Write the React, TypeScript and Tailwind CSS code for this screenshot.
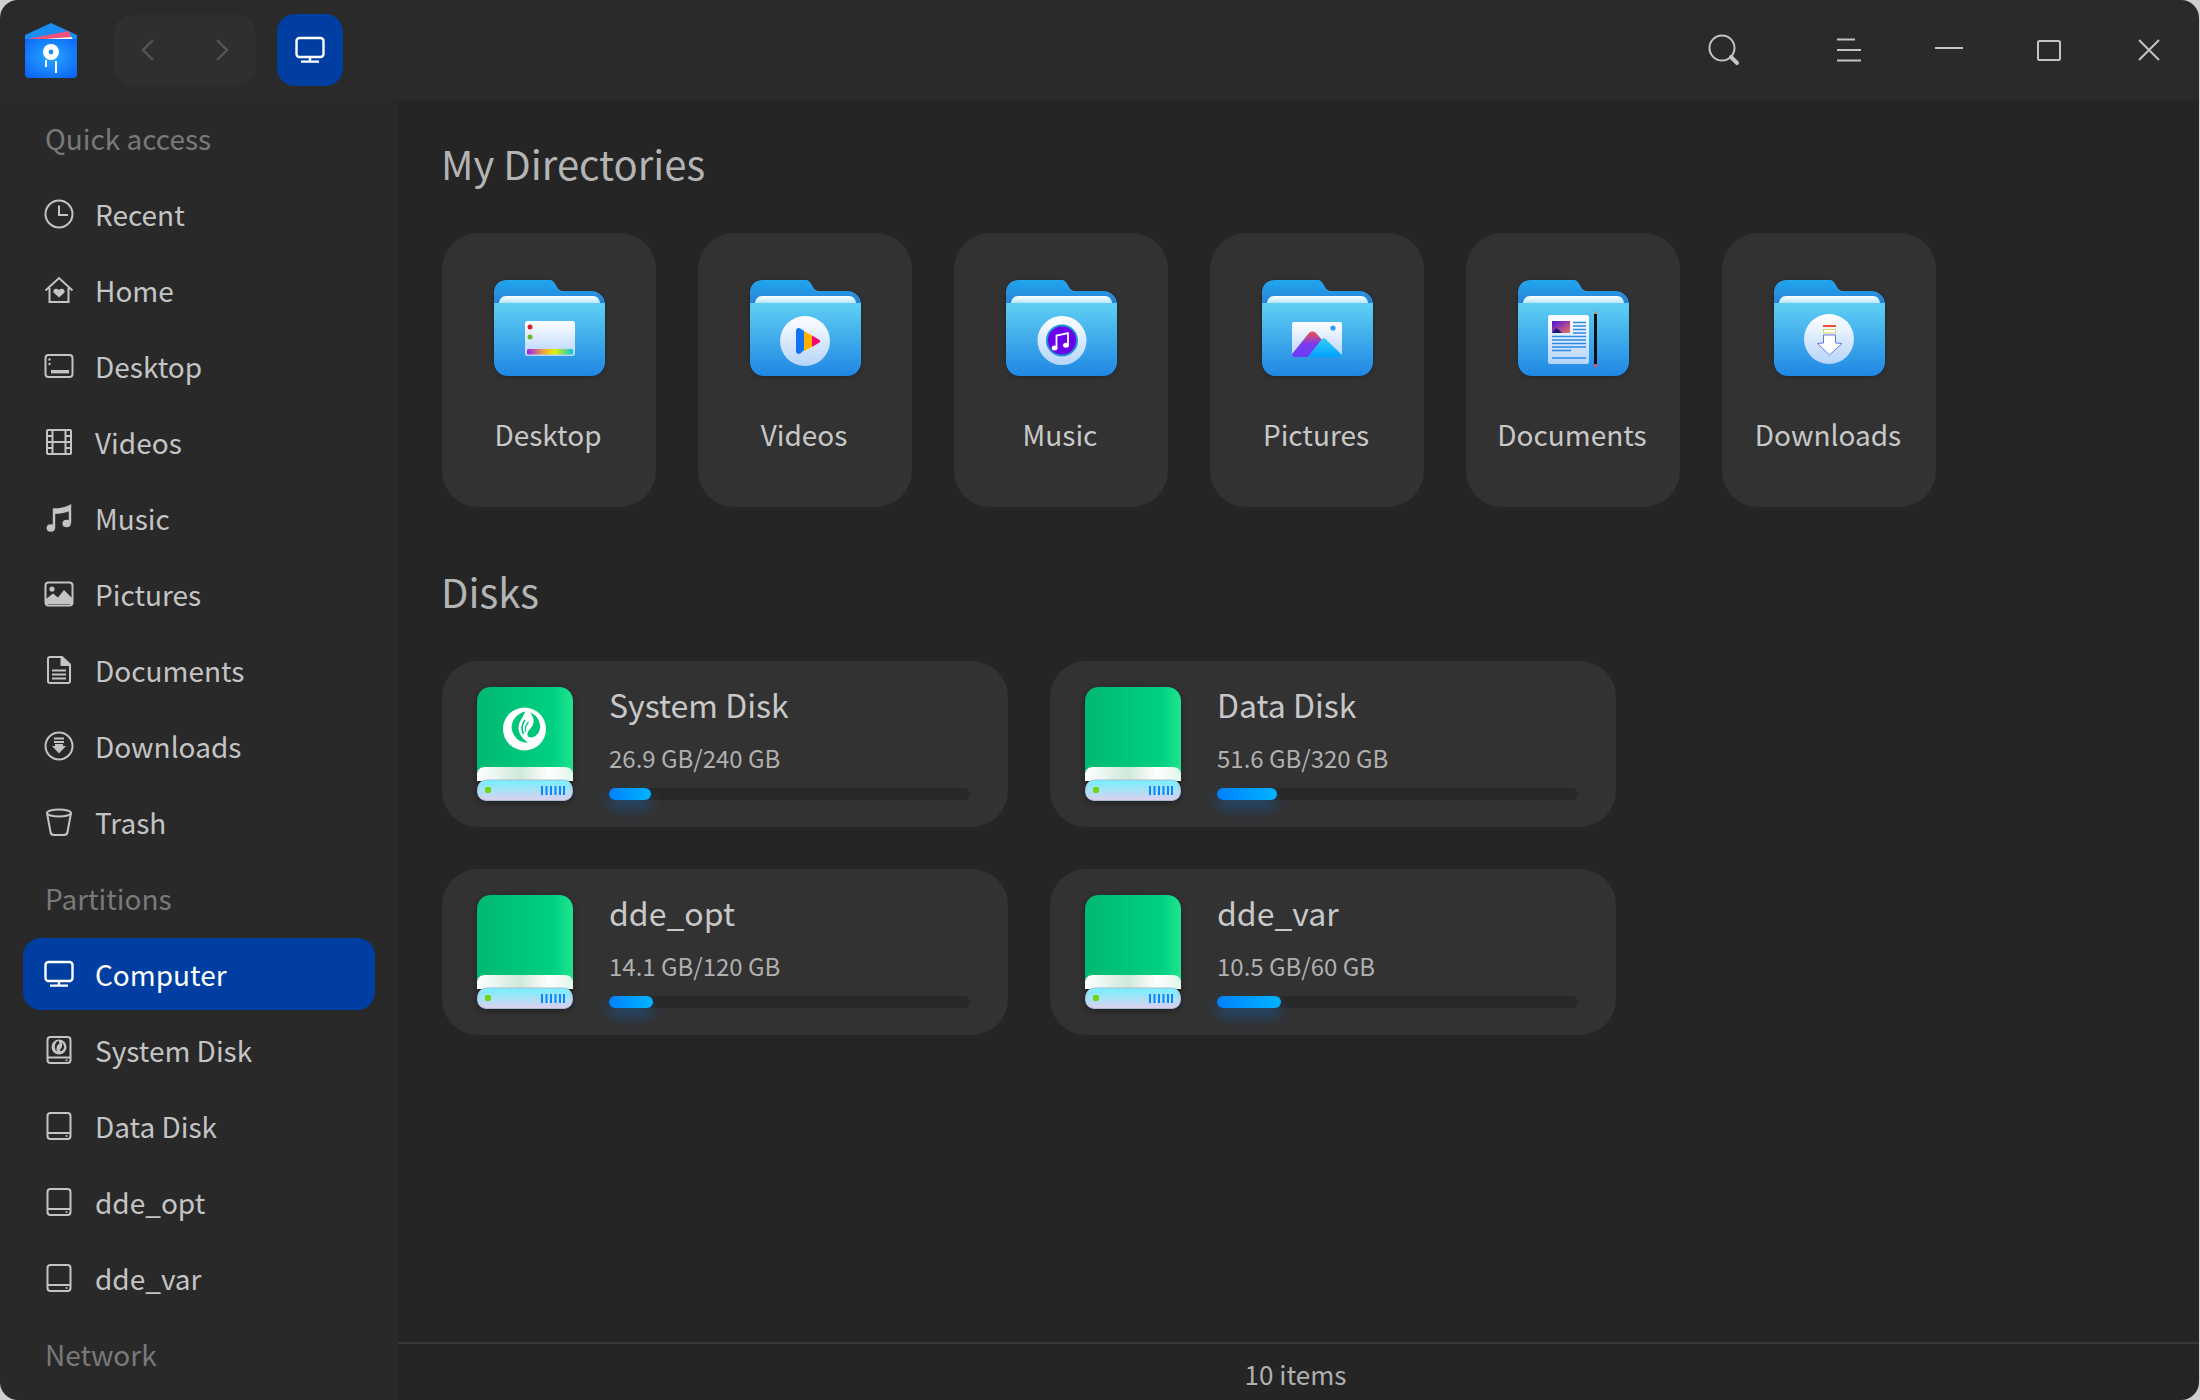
import type { ReactNode } from 'react';

const font = { fontFamily: '"Noto Sans CJK SC", "Noto Sans", sans-serif' };

function Icon({ children, white }: { children: ReactNode; white?: boolean }) {
    return (
        <svg width="30" height="30" viewBox="0 0 30 30" fill="none" stroke={white ? '#ffffff' : '#c4c4c4'} strokeWidth="2" className="shrink-0">
            {children}
        </svg>
    );
}

const fillGray = '#c4c4c4';

const icons: Record<string, ReactNode> = {
    recent: (
        <>
            <circle cx="15" cy="15" r="13.5" />
            <path d="M15 6.5V16H24" />
        </>
    ),
    home: (
        <>
            <path d="M1.5 15.5L15 3L28.5 15.5" />
            <path d="M5.5 13V27H24.5V13" />
            <path d="M15 22.5L9.5 17.5C8.5 14 12.5 12.5 15 15C17.5 12.5 21.5 14 20.5 17.5Z" fill={fillGray} stroke="none" />
        </>
    ),
    desktop: (
        <>
            <rect x="1.5" y="4" width="27" height="22" rx="3" />
            <rect x="7" y="19" width="18" height="3.4" fill={fillGray} stroke="none" />
            <circle cx="5.5" cy="8.5" r="1.2" fill={fillGray} stroke="none" />
            <circle cx="5.5" cy="13" r="1.2" fill={fillGray} stroke="none" />
        </>
    ),
    videos: (
        <>
            <rect x="3" y="3" width="24" height="24" rx="1" />
            <path d="M8.5 3V27M21.5 3V27M3 9H8.5M3 15H8.5M3 21H8.5M21.5 9H27M21.5 15H27M21.5 21H27M8.5 15H21.5" />
        </>
    ),
    music: (
        <>
            <path d="M10 25V6.5C15 6.5 21 5.5 26 3V20" strokeWidth="2.4" />
            <path d="M10 7C15 7 21 6 26 3.6V8C21 10 15 11 10 11Z" fill={fillGray} stroke="none" />
            <ellipse cx="6.8" cy="25" rx="4.2" ry="3.8" fill={fillGray} stroke="none" />
            <ellipse cx="22.6" cy="20.5" rx="4.2" ry="3.8" fill={fillGray} stroke="none" />
        </>
    ),
    pictures: (
        <>
            <rect x="1.5" y="3.5" width="27" height="23" rx="3" />
            <circle cx="8" cy="10" r="2.6" fill={fillGray} stroke="none" />
            <path d="M2 25V20L9 14.5L14 18.5L20 11L28 19V25Z" fill={fillGray} stroke="none" />
        </>
    ),
    documents: (
        <>
            <path d="M4 4C4 2.8 4.8 2 6 2H18L26 9.5V26C26 27.2 25.2 28 24 28H6C4.8 28 4 27.2 4 26Z" />
            <path d="M17.5 2V10H26" fill={fillGray} />
            <path d="M8 15.5H22M8 19.5H22M8 23.5H22" />
        </>
    ),
    downloads: (
        <>
            <circle cx="15" cy="15" r="13.5" />
            <path d="M10 7.5H20M10 11H20" />
            <path d="M8 15H22L15 22.5Z" fill={fillGray} stroke="none" />
            <rect x="11" y="13" width="8" height="3" fill={fillGray} stroke="none" />
        </>
    ),
    trash: (
        <>
            <ellipse cx="15" cy="6" rx="12" ry="3.6" />
            <path d="M3 6L6.5 25C6.8 27 8.5 28 10 28H20C21.5 28 23.2 27 23.5 25L27 6" />
        </>
    ),
    computer: (
        <>
            <rect x="1.5" y="3" width="27" height="19" rx="3" strokeWidth="2.4" />
            <path d="M15 22V26M6 26.6H24" strokeWidth="2.4" />
        </>
    ),
    system: (
        <>
            <rect x="3.5" y="2" width="23" height="26" rx="3" />
            <path d="M3.5 22.5H26.5" />
            <circle cx="15" cy="12" r="7.5" fill={fillGray} stroke="none" />
            <path d="M14.5 5.5C10.5 7.5 9.5 13 13 17C12 13.5 12.5 10 15.5 8.5Z" fill="#292929" stroke="none" />
            <path d="M17.5 7C19 10 18 12.5 16.5 14C15.5 15.5 16 16.5 17.5 16C19.5 15 20.5 13 20 11C19.5 9 18.5 8 17.5 7Z" fill="#292929" stroke="none" />
            <circle cx="22.5" cy="25.3" r="1" fill={fillGray} stroke="none" />
        </>
    ),
    disk: (
        <>
            <rect x="3.5" y="2" width="23" height="26" rx="3" />
            <path d="M3.5 22H26.5" />
            <circle cx="22.5" cy="25" r="1" fill={fillGray} stroke="none" />
        </>
    ),
};

const sidebar = [
    { label: 'Quick access', heading: true },
    { label: 'Recent', icon: 'recent' },
    { label: 'Home', icon: 'home' },
    { label: 'Desktop', icon: 'desktop' },
    { label: 'Videos', icon: 'videos' },
    { label: 'Music', icon: 'music' },
    { label: 'Pictures', icon: 'pictures' },
    { label: 'Documents', icon: 'documents' },
    { label: 'Downloads', icon: 'downloads' },
    { label: 'Trash', icon: 'trash' },
    { label: 'Partitions', heading: true },
    { label: 'Computer', icon: 'computer', active: true },
    { label: 'System Disk', icon: 'system' },
    { label: 'Data Disk', icon: 'disk' },
    { label: 'dde_opt', icon: 'disk' },
    { label: 'dde_var', icon: 'disk' },
    { label: 'Network', heading: true },
];

function SvgDefs() {
    return (
        <svg width="0" height="0" className="absolute">
            <defs>
                <linearGradient id="fBack" x1="0" y1="0" x2="0" y2="1">
                    <stop offset="0" stopColor="#20a8ee" />
                    <stop offset="1" stopColor="#2a80d8" />
                </linearGradient>
                <linearGradient id="fPaper" x1="0" y1="0" x2="0" y2="1">
                    <stop offset="0" stopColor="#ffffff" />
                    <stop offset="1" stopColor="#a9e4fa" />
                </linearGradient>
                <linearGradient id="fFront" x1="0" y1="0" x2="0" y2="1">
                    <stop offset="0" stopColor="#5fcff4" />
                    <stop offset="1" stopColor="#1f87e3" />
                </linearGradient>
                <linearGradient id="fBadge" x1="0" y1="0" x2="0" y2="1">
                    <stop offset="0" stopColor="#ffffff" />
                    <stop offset="1" stopColor="#b6d4fa" />
                </linearGradient>
                <linearGradient id="rainbow" x1="0" y1="0" x2="1" y2="0">
                    <stop offset="0" stopColor="#9a1ff0" />
                    <stop offset="0.35" stopColor="#f0a040" />
                    <stop offset="0.6" stopColor="#e8f000" />
                    <stop offset="1" stopColor="#00c8e0" />
                </linearGradient>
                <linearGradient id="mtnA" x1="0" y1="0" x2="0" y2="1">
                    <stop offset="0" stopColor="#f0504a" />
                    <stop offset="0.5" stopColor="#7a3cf0" />
                    <stop offset="1" stopColor="#6a3cf5" />
                </linearGradient>
                <linearGradient id="mtnB" x1="0" y1="0" x2="0" y2="1">
                    <stop offset="0" stopColor="#35d0f0" />
                    <stop offset="1" stopColor="#00a0ff" />
                </linearGradient>
                <linearGradient id="docPic" x1="0" y1="0" x2="1" y2="1">
                    <stop offset="0" stopColor="#4c10e0" />
                    <stop offset="1" stopColor="#f0705a" />
                </linearGradient>
                <linearGradient id="dBody" x1="0" y1="0" x2="1" y2="0">
                    <stop offset="0" stopColor="#00b872" />
                    <stop offset="0.8" stopColor="#00d082" />
                    <stop offset="1" stopColor="#1fe58c" />
                </linearGradient>
                <linearGradient id="dBand" x1="0" y1="0" x2="1" y2="0">
                    <stop offset="0" stopColor="#ffffff" />
                    <stop offset="0.45" stopColor="#cfe9da" />
                    <stop offset="0.75" stopColor="#ffffff" />
                    <stop offset="1" stopColor="#e0f6ea" />
                </linearGradient>
                <linearGradient id="dFront" x1="0" y1="0" x2="0" y2="1">
                    <stop offset="0" stopColor="#74f2ff" />
                    <stop offset="1" stopColor="#dcd0ee" />
                </linearGradient>
            </defs>
        </svg>
    );
}

const folderBadges: Record<string, ReactNode> = {
    Desktop: (
        <>
            <rect x="31" y="41" width="50" height="35" rx="2.5" fill="url(#fBadge)" />
            <circle cx="36" cy="47" r="2.5" fill="#d4202f" />
            <circle cx="36" cy="57" r="2.5" fill="#6cb82a" />
            <rect x="33" y="69" width="46" height="5.5" rx="1.5" fill="url(#rainbow)" />
        </>
    ),
    Videos: (
        <>
            <circle cx="55" cy="61" r="25" fill="url(#fBadge)" />
            <path d="M46 51C46 48 49 47 51 49L54 51V70L51 73C49 75 46 74 46 71Z" fill="#1273f5" />
            <path d="M54 51L62 55.5V67L54 71Z" fill="#ffb000" />
            <path d="M62 55.5L69.5 60C70.5 60.7 70.5 61.8 69.5 62.4L62 67Z" fill="#f5056e" />
        </>
    ),
    Music: (
        <>
            <circle cx="56" cy="60.5" r="24.5" fill="url(#fBadge)" />
            <circle cx="56" cy="60.5" r="16" fill="#1f8fd2" />
            <circle cx="56" cy="60.5" r="14" fill="#6a00ea" />
            <path d="M50.5 68V55.5L62 53V65" fill="none" stroke="#ffffff" strokeWidth="1.8" />
            <ellipse cx="48.6" cy="68" rx="2.9" ry="2.5" fill="#ffffff" />
            <ellipse cx="60" cy="65.2" rx="2.9" ry="2.5" fill="#ffffff" />
        </>
    ),
    Pictures: (
        <>
            <rect x="30" y="42" width="50" height="35" rx="2" fill="url(#fBadge)" />
            <circle cx="71" cy="48" r="2.6" fill="#2f9cf0" />
            <path d="M30 74L47 53C49 51 52 51 54 53L60 60L46 77H32C30.5 77 30 76 30 74Z" fill="url(#mtnA)" />
            <path d="M46 77L60 59C61 58 62.5 58 63.5 59L80 75C80 76.5 79 77 78 77Z" fill="url(#mtnB)" />
        </>
    ),
    Documents: (
        <>
            <rect x="30" y="35" width="41" height="49" rx="2.5" fill="url(#fBadge)" />
            <rect x="34" y="41" width="18" height="12" fill="url(#docPic)" />
            <path d="M34 53L38 48L41 50L44 53Z" fill="#1a1a80" />
            <path d="M55 42.5H68M55 46H68M55 49.5H68M55 53H68M34 56.5H68M34 60H68M34 63.5H68M34 67H68M34 70.5H53M34 78H68" stroke="#2b8be0" strokeWidth="1.3" />
            <rect x="76" y="34" width="3" height="50" fill="#101010" />
            <path d="M76 34L77.5 30L79 34Z" fill="#c09050" />
            <rect x="76" y="84" width="3" height="3" fill="#e05070" />
        </>
    ),
    Downloads: (
        <>
            <circle cx="55" cy="59" r="25" fill="url(#fBadge)" />
            <rect x="49" y="45" width="13" height="2" fill="#f0503c" />
            <rect x="49.5" y="49.5" width="12" height="3.5" fill="#fff" stroke="#e0d040" strokeWidth="0.8" />
            <path d="M49.5 55H61.5V63L68 63.5L55.5 75L43.5 63.5L49.5 63Z" fill="#ffffff" stroke="#5a6ae0" strokeWidth="0.9" />
        </>
    ),
};

function Folder({ name }: { name: string }) {
    return (
        <svg width="111" height="98" viewBox="0 0 111 98" className="overflow-visible drop-shadow-[0_1px_2px_rgba(0,0,0,0.3)]">
            <path d="M0 24V13C0 5 5 0 13 0H55C59 0 60 2 62 5C64 9 66 11 70 11H97C105 11 111 17 111 24Z" fill="url(#fBack)" />
            <path d="M5 24C5 19 8 16 12 16H99C103 16 106 19 106 24Z" fill="url(#fPaper)" />
            <path d="M0 23H111V82C111 90 105 96 97 96H14C6 96 0 90 0 82Z" fill="url(#fFront)" />
            {folderBadges[name]}
        </svg>
    );
}

// white disc, green swirl cut into it
function DeepinLogo() {
    return (
        <>
            <circle cx="47.5" cy="42" r="21.5" fill="#ffffff" />
            <path d="M48 24.5C38 27 32 37 36 46C39 53 45 56 51 55.5C44 51 40 44 42 37.5C43.5 32 47 29 48 24.5Z" fill="#00c67a" />
            <path d="M53 25.5C58 31 57.5 37 53.5 41.5C49.5 45.5 49 50.5 54.5 50.5C60.5 49.5 64 43.5 63 37.5C62 31.5 58 27 53 25.5Z" fill="#00c67a" />
            <path d="M48 33C45 37 44 42 46.5 47" stroke="#00c67a" strokeWidth="1.6" fill="none" />
            <path d="M51.5 35C49 38 47.5 41 48.5 45" stroke="#00c67a" strokeWidth="1.2" fill="none" />
        </>
    );
}

function DiskIcon({ logo }: { logo?: boolean }) {
    return (
        <svg width="96" height="114" viewBox="0 0 96 114" className="shrink-0 drop-shadow-[0_2px_3px_rgba(0,0,0,0.35)]">
            <path d="M0 90V14C0 6 6 0 14 0H82C90 0 96 6 96 14V90Z" fill="url(#dBody)" />
            {logo && <DeepinLogo />}
            <path d="M0 94V88C0 83 3 80 8 80H88C93 80 96 83 96 88V94Z" fill="url(#dBand)" />
            <path d="M0.5 104C0.5 97 4 93 10 93H86C92 93 95.5 97 95.5 104C95.5 110 92 113.5 86 113.5H10C4 113.5 0.5 110 0.5 104Z" fill="url(#dFront)" stroke="#a9b8d8" strokeWidth="1" />
            <circle cx="11" cy="103" r="3.2" fill="#6fd81e" />
            <path d="M65 99V108M69.5 99V108M74 99V108M78.5 99V108M83 99V108M87 99V108" stroke="#0a86f5" strokeWidth="2" />
        </svg>
    );
}

const dirs = ['Desktop', 'Videos', 'Music', 'Pictures', 'Documents', 'Downloads'];

const disks = [
    { name: 'System Disk', size: '26.9 GB/240 GB', pct: 11.7, logo: true },
    { name: 'Data Disk', size: '51.6 GB/320 GB', pct: 16.6 },
    { name: 'dde_opt', size: '14.1 GB/120 GB', pct: 12.2 },
    { name: 'dde_var', size: '10.5 GB/60 GB', pct: 17.6 },
];

function TopBar() {
    return (
        <div className="h-[100px] shrink-0 flex items-center bg-[#2a2a2a] pl-[25px]">
            <svg width="52" height="56" viewBox="0 0 52 56" className="shrink-0">
                <defs>
                    <radialGradient id="logoBlue" cx="0.5" cy="0.45" r="0.7">
                        <stop offset="0" stopColor="#28a8ff" />
                        <stop offset="1" stopColor="#0a62f8" />
                    </radialGradient>
                </defs>
                <path d="M0 13L26 1L52 13V52C52 54 50 56 48 56H4C2 56 0 54 0 52Z" fill="#1b8cf0" />
                <path d="M2 17L44 9L47 18H2Z" fill="#f0527c" />
                <path d="M6 18L47 15L48 20H6Z" fill="#fbf4f4" />
                <path d="M0 17H52V52C52 54 50 56 48 56H4C2 56 0 54 0 52Z" fill="url(#logoBlue)" />
                <circle cx="26" cy="30" r="8" fill="#ffffff" />
                <circle cx="26" cy="30" r="2.4" fill="#1b8cf0" />
                <rect x="20" y="38" width="2" height="7" fill="#ffffff" />
                <rect x="30" y="39" width="2" height="12" fill="#ffffff" />
            </svg>
            <div className="ml-[37px] w-[142px] h-[70px] rounded-[18px] bg-[#2f2f2f] flex items-center justify-between pl-[27px] pr-[27px]">
                <svg width="14" height="24" viewBox="0 0 14 24" fill="none" stroke="#555555" strokeWidth="2.4"><path d="M12 2L2 12L12 22" /></svg>
                <svg width="14" height="24" viewBox="0 0 14 24" fill="none" stroke="#555555" strokeWidth="2.4"><path d="M2 2L12 12L2 22" /></svg>
            </div>
            <div className="ml-[21px] w-[66px] h-[72px] rounded-[18px] bg-[#003fa1] flex items-center justify-center">
                <Icon white>{icons.computer}</Icon>
            </div>
            <div className="ml-auto flex items-center h-full">
                <div className="w-[100px] mr-[25px] flex justify-center">
                    <svg width="32" height="32" viewBox="0 0 32 32" fill="none" stroke="#c4c4c4">
                        <circle cx="14" cy="14" r="12.5" strokeWidth="2" />
                        <path d="M23 23L29 29" strokeWidth="4" strokeLinecap="round" />
                    </svg>
                </div>
                <div className="w-[100px] flex justify-center">
                    <svg width="26" height="24" viewBox="0 0 26 24" fill="none" stroke="#c4c4c4" strokeWidth="2"><path d="M1 1.5H19M1 12H25M1 22.5H25" /></svg>
                </div>
                <div className="w-[100px] flex justify-center pb-[4px]">
                    <svg width="28" height="4" viewBox="0 0 28 4" fill="none" stroke="#c4c4c4" strokeWidth="2"><path d="M0 2H28" /></svg>
                </div>
                <div className="w-[100px] flex justify-center">
                    <svg width="24" height="21" viewBox="0 0 24 21" fill="none" stroke="#c4c4c4" strokeWidth="2"><rect x="1" y="1" width="22" height="19" rx="1.5" /></svg>
                </div>
                <div className="w-[100px] flex justify-center">
                    <svg width="24" height="24" viewBox="0 0 24 24" fill="none" stroke="#c4c4c4" strokeWidth="2"><path d="M2 2L22 22M22 2L2 22" /></svg>
                </div>
            </div>
        </div>
    );
}

function Sidebar() {
    return (
        <div className="w-[398px] shrink-0 bg-[#292929] overflow-hidden">
            {sidebar.map((item) =>
                item.heading ? (
                    <div key={item.label} className="h-[76px] flex items-center pl-[45px] text-[28px] text-[#797979]">
                        {item.label}
                    </div>
                ) : (
                    <div key={item.label} className="h-[76px] py-[2px] pl-[23px] pr-[23px]">
                        <div className={`h-[72px] rounded-[18px] flex items-center pl-[21px] gap-[21px] text-[28px] ${item.active ? 'bg-[#003fa1] text-white' : 'text-[#c4c4c4]'}`}>
                            <Icon white={item.active}>{icons[item.icon as string]}</Icon>
                            <span>{item.label}</span>
                        </div>
                    </div>
                )
            )}
        </div>
    );
}

function Main() {
    return (
        <div className="flex-1 min-w-0 flex flex-col bg-[#252525]">
            <div className="flex-1 pl-[44px] pt-[35px]">
                <h2 className="-ml-px text-[40px] leading-[56px] text-[#b4b4b4]">My Directories</h2>
                <div className="mt-[42px] flex gap-[42px]">
                    {dirs.map((name) => (
                        <div key={name} className="w-[214px] h-[274px] rounded-[36px] bg-[#323232] flex flex-col items-center pt-[47px]">
                            <Folder name={name} />
                            <div className="mt-[36px] pr-[2px] text-[28px] leading-[40px] text-[#c8c8c8]">{name}</div>
                        </div>
                    ))}
                </div>
                <h2 className="-ml-px mt-[56px] text-[40px] leading-[56px] text-[#b4b4b4]">Disks</h2>
                <div className="mt-[42px] grid grid-cols-[566px_566px] gap-[42px]">
                    {disks.map((d) => (
                        <div key={d.name} className="h-[166px] rounded-[36px] bg-[#323232] flex items-center pl-[35px] pr-[38px] gap-[36px]">
                            <DiskIcon logo={d.logo} />
                            <div className="flex-1 min-w-0 pt-[1px]">
                                <div className="text-[32px] leading-[44px] text-[#c8c8c8] -mt-[8px]">{d.name}</div>
                                <div className="mt-[14px] text-[24px] leading-[36px] text-[#b0b0b0]">{d.size}</div>
                                <div className="mt-[12px] h-[12px] rounded-full bg-[#282828]">
                                    <div
                                        className="h-full rounded-full bg-gradient-to-r from-[#0081ff] to-[#00b4ff] shadow-[0_8px_14px_rgba(0,129,255,0.35)]"
                                        style={{ width: `${d.pct}%` }}
                                    />
                                </div>
                            </div>
                        </div>
                    ))}
                </div>
            </div>
            <div className="h-[58px] shrink-0 border-t-2 border-[#383838] flex items-center justify-center pt-[2px] pr-[6px] text-[26px] text-[#b0b0b0]">
                10 items
            </div>
        </div>
    );
}

function App() {
    return (
        <div className="w-[2200px] h-[1400px] bg-[#d0d0d0] overflow-hidden" style={font}>
            <SvgDefs />
            <div className="w-[2199px] h-[1400px] rounded-[18px] overflow-hidden flex flex-col">
                <TopBar />
                <div className="flex-1 min-h-0 flex">
                    <Sidebar />
                    <Main />
                </div>
            </div>
        </div>
    );
}

export default App;
